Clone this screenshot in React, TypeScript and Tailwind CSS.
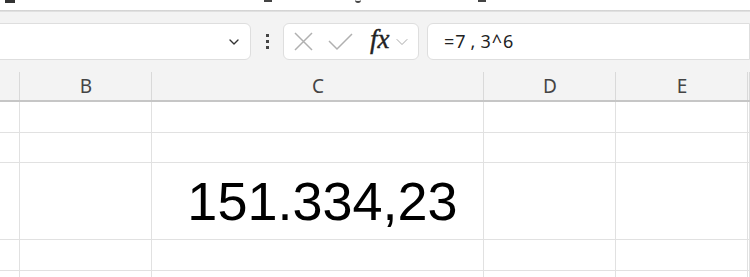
import { ChevronDown } from 'lucide-react';

const COLS = ['', 'B', 'C', 'D', 'E', ''];
const ROWS = ['h-[31px]', 'h-[30px]', 'h-[77px]', 'h-[31px]', 'h-[31px]'];

function XIcon() {
  return (
    <svg width="21" height="21" viewBox="0 0 21 21" fill="none" stroke="#b0b0b0" strokeWidth="1.5">
      <path d="M2 2 L19 19 M19 2 L2 19" />
    </svg>
  );
}

function CheckIcon() {
  return (
    <svg width="25" height="19" viewBox="0 0 25 19" fill="none" stroke="#b0b0b0" strokeWidth="1.5">
      <path d="M1 9 L9 17 L24 2" />
    </svg>
  );
}

export default function App() {
  return (
    <div className="w-[750px] h-[277px] overflow-hidden bg-white" style={{ fontFamily: '"Noto Sans", "Open Sans", sans-serif' }}>
      {/* clipped ribbon bits above */}
      <div className="h-[10px] bg-white relative">
        <span className="absolute left-[5px] top-0 w-[10px] h-[3px] bg-[#333]" />
        <span className="absolute left-[264px] top-0 w-[8px] h-[2px] bg-[#444]" />
        <span className="absolute left-[355px] top-0 w-[6px] h-[3px] rounded-b-full border-b-2 border-[#444]" />
        <span className="absolute left-[478px] top-0 w-[8px] h-[2px] bg-[#444]" />
      </div>
      <div className="h-[2px] bg-gradient-to-b from-[#cfcfcf] to-[#e6e6e6]" />

      {/* formula bar */}
      <div className="h-[60px] bg-[#f3f3f3] flex items-start pt-[11px]">
        <div className="ml-[-10px] w-[261px] h-[37px] bg-white border border-[#dedede] rounded-[6px] flex items-center justify-end pr-[8px]">
          <ChevronDown size={16} strokeWidth={2} color="#333" />
        </div>
        <div className="w-[32px] h-[37px] flex flex-col items-center justify-center gap-[3px]">
          <span className="w-[3px] h-[3px] bg-[#444]" />
          <span className="w-[3px] h-[3px] bg-[#444]" />
          <span className="w-[3px] h-[3px] bg-[#444]" />
        </div>
        <div className="w-[136px] h-[37px] bg-white border border-[#dedede] rounded-[6px] flex items-center pl-[9px]">
          <XIcon />
          <span className="ml-[14px]"><CheckIcon /></span>
          <span className="ml-[17px] text-[27px] italic text-[#222] leading-none pb-[4px] [-webkit-text-stroke:0.4px_#222]" style={{ fontFamily: '"Liberation Serif", serif' }}>fx</span>
          <span className="ml-[2px]"><ChevronDown size={20} strokeWidth={1.1} color="#a0a0a0" /></span>
        </div>
        <div className="ml-[8px] flex-1 h-[37px] bg-white border border-[#dedede] rounded-l-[6px] flex items-center pl-[16px] text-[18px] text-[#222] tracking-[1px]">
          =7<span className="px-[4px]">,</span>3^6
        </div>
      </div>

      {/* column header */}
      <div className="grid grid-cols-[20px_132px_332px_132px_132px_1fr] h-[30px] bg-[#f3f3f3] border-b-2 border-[#c6c6c6]">
        {COLS.map((c, i) => (
          <div key={i} className="border-r border-[#d9d9d9] flex items-center justify-center text-[19px] text-[#444] leading-none pl-[1px]">
            {c}
          </div>
        ))}
      </div>

      {/* grid */}
      {ROWS.map((h, r) => (
        <div key={r} className={`grid grid-cols-[20px_132px_332px_132px_132px_1fr] ${h} border-b border-[#e1e1e1]`}>
          {COLS.map((_, i) => (
            <div key={i} className="border-r border-[#e1e1e1] flex items-center justify-center">
              {r === 2 && i === 2 && (
                <span className="text-[54px] text-black leading-none pl-[10px]" style={{ fontFamily: '"Liberation Sans", Arial, sans-serif' }}>
                  151.334,23
                </span>
              )}
            </div>
          ))}
        </div>
      ))}
    </div>
  );
}
